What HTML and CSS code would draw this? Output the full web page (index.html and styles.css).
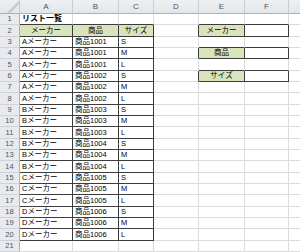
FILE: index.html
```html
<!DOCTYPE html>
<html lang="ja">
<head>
<meta charset="utf-8">
<link rel="stylesheet" href="styles.css">
</head>
<body>
<div class="sheet">
<table class="grid">
<colgroup>
<col class="w-rh"><col class="w-a"><col class="w-b"><col class="w-c"><col class="w-d"><col class="w-e"><col class="w-f"><col class="w-g">
</colgroup>
<thead>
<tr class="colhdr"><th class="corner"></th><th>A</th><th>B</th><th>C</th><th>D</th><th>E</th><th>F</th><th></th></tr>
</thead>
<tbody>
<tr><th>1</th><td class="title bb">リスト一覧</td><td class="bb"></td><td class="bb"></td><td></td><td class="bb"></td><td class="bb"></td><td></td></tr>
<tr><th>2</th><td class="hd box">メーカー</td><td class="hd box">商品</td><td class="hd box">サイズ</td><td class="br"></td><td class="hd box">メーカー</td><td class="box"></td><td></td></tr>
<tr><th>3</th><td class="box">Aメーカー</td><td class="box">商品1001</td><td class="box">S</td><td></td><td class="bb"></td><td class="bb"></td><td></td></tr>
<tr><th>4</th><td class="box">Aメーカー</td><td class="box">商品1001</td><td class="box">M</td><td class="br"></td><td class="hd box">商品</td><td class="box"></td><td></td></tr>
<tr><th>5</th><td class="box">Aメーカー</td><td class="box">商品1001</td><td class="box">L</td><td></td><td class="bb"></td><td class="bb"></td><td></td></tr>
<tr><th>6</th><td class="box">Aメーカー</td><td class="box">商品1002</td><td class="box">S</td><td class="br"></td><td class="hd box">サイズ</td><td class="box"></td><td></td></tr>
<tr><th>7</th><td class="box">Aメーカー</td><td class="box">商品1002</td><td class="box">M</td><td></td><td></td><td></td><td></td></tr>
<tr><th>8</th><td class="box">Aメーカー</td><td class="box">商品1002</td><td class="box">L</td><td></td><td></td><td></td><td></td></tr>
<tr><th>9</th><td class="box">Bメーカー</td><td class="box">商品1003</td><td class="box">S</td><td></td><td></td><td></td><td></td></tr>
<tr><th>10</th><td class="box">Bメーカー</td><td class="box">商品1003</td><td class="box">M</td><td></td><td></td><td></td><td></td></tr>
<tr><th>11</th><td class="box">Bメーカー</td><td class="box">商品1003</td><td class="box">L</td><td></td><td></td><td></td><td></td></tr>
<tr><th>12</th><td class="box">Bメーカー</td><td class="box">商品1004</td><td class="box">S</td><td></td><td></td><td></td><td></td></tr>
<tr><th>13</th><td class="box">Bメーカー</td><td class="box">商品1004</td><td class="box">M</td><td></td><td></td><td></td><td></td></tr>
<tr><th>14</th><td class="box">Bメーカー</td><td class="box">商品1004</td><td class="box">L</td><td></td><td></td><td></td><td></td></tr>
<tr><th>15</th><td class="box">Cメーカー</td><td class="box">商品1005</td><td class="box">S</td><td></td><td></td><td></td><td></td></tr>
<tr><th>16</th><td class="box">Cメーカー</td><td class="box">商品1005</td><td class="box">M</td><td></td><td></td><td></td><td></td></tr>
<tr><th>17</th><td class="box">Cメーカー</td><td class="box">商品1005</td><td class="box">L</td><td></td><td></td><td></td><td></td></tr>
<tr><th>18</th><td class="box">Dメーカー</td><td class="box">商品1006</td><td class="box">S</td><td></td><td></td><td></td><td></td></tr>
<tr><th>19</th><td class="box">Dメーカー</td><td class="box">商品1006</td><td class="box">M</td><td></td><td></td><td></td><td></td></tr>
<tr><th>20</th><td class="box">Dメーカー</td><td class="box">商品1006</td><td class="box">L</td><td></td><td></td><td></td><td></td></tr>
<tr><th>21</th><td></td><td></td><td></td><td></td><td></td><td></td><td></td></tr>
</tbody>
</table>
</div>
</body>
</html>
```
FILE: styles.css
```css
html, body {
  margin: 0;
  padding: 0;
  background: #ffffff;
}
.sheet {
  width: 300px;
  height: 252px;
  overflow: hidden;
}
.grid {
  table-layout: fixed;
  border-collapse: separate;
  border-spacing: 0;
  width: 329px;
  font-family: "Liberation Sans", "Noto Sans CJK JP", sans-serif;
  font-size: 7.5px;
  color: #000;
}
.w-rh { width: 20px; }
.w-a { width: 53px; }
.w-b { width: 46px; }
.w-c { width: 35px; }
.w-d { width: 45px; }
.w-e { width: 46px; }
.w-f { width: 44px; }
.w-g { width: 40px; }

.grid td, .grid th {
  padding: 0;
  border: 0;
  border-right: 1px solid #dcdcdc;
  border-bottom: 1px solid #dcdcdc;
  overflow: hidden;
  white-space: nowrap;
  line-height: 10px;
  box-sizing: border-box;
}
.grid td {
  padding-left: 2px;
}
.grid tbody tr { height: 11px; }
.grid tbody tr:nth-child(3n+2) { height: 12px; }
.colhdr { height: 14px; }
.colhdr th {
  background: linear-gradient(#eef0f3, #e3e6ea);
  color: #4a5568;
  font-weight: normal;
  font-size: 8px;
  text-align: center;
  border-right: 1px solid #c9ccd1;
  border-bottom: 1px solid #a9b1bb;
}
.colhdr .corner {
  background:
    linear-gradient(135deg, transparent 60%, #c9ccd1 60%, #c9ccd1 72%, transparent 72%),
    linear-gradient(#eef0f3, #e3e6ea);
}
.grid tbody th {
  background: #e8eaee;
  color: #4a5568;
  font-weight: normal;
  font-size: 7.5px;
  text-align: center;
  border-right: 1px solid #a9b1bb;
  border-bottom: 1px solid #cfd3d8;
}
.title {
  font-weight: bold;
  font-size: 8px;
}
.bb { border-bottom-color: #3c3c3c !important; }
.br { border-right-color: #3c3c3c !important; }
.box {
  border-right-color: #3c3c3c !important;
  border-bottom-color: #3c3c3c !important;
}
.hd {
  background: #d8e4bc;
  text-align: center;
  padding-left: 0 !important;
}
```
